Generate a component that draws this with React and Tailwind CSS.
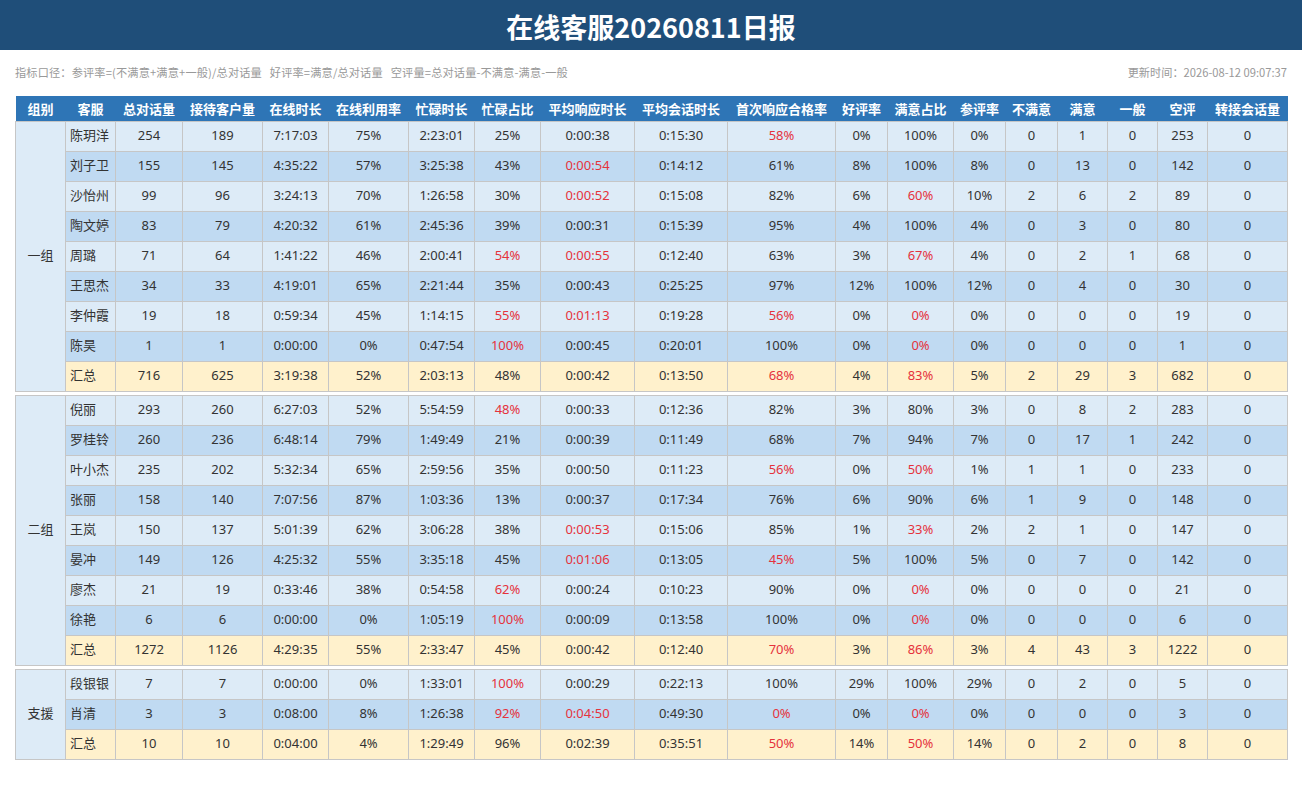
import React from 'react';

const widths = [50, 50, 67, 80, 66, 80, 66, 66, 94, 93, 108, 52, 66, 52, 52, 50, 50, 50, 80];

const headers = [
  '组别', '客服', '总对话量', '接待客户量', '在线时长', '在线利用率', '忙碌时长', '忙碌占比',
  '平均响应时长', '平均会话时长', '首次响应合格率', '好评率', '满意占比', '参评率',
  '不满意', '满意', '一般', '空评', '转接会话量',
];

// '!' prefix marks a value shown in red
const groups = [
  {
    name: '一组',
    rows: [
      ['陈玥洋', '254', '189', '7:17:03', '75%', '2:23:01', '25%', '0:00:38', '0:15:30', '!58%', '0%', '100%', '0%', '0', '1', '0', '253', '0'],
      ['刘子卫', '155', '145', '4:35:22', '57%', '3:25:38', '43%', '!0:00:54', '0:14:12', '61%', '8%', '100%', '8%', '0', '13', '0', '142', '0'],
      ['沙怡州', '99', '96', '3:24:13', '70%', '1:26:58', '30%', '!0:00:52', '0:15:08', '82%', '6%', '!60%', '10%', '2', '6', '2', '89', '0'],
      ['陶文婷', '83', '79', '4:20:32', '61%', '2:45:36', '39%', '0:00:31', '0:15:39', '95%', '4%', '100%', '4%', '0', '3', '0', '80', '0'],
      ['周璐', '71', '64', '1:41:22', '46%', '2:00:41', '!54%', '!0:00:55', '0:12:40', '63%', '3%', '!67%', '4%', '0', '2', '1', '68', '0'],
      ['王思杰', '34', '33', '4:19:01', '65%', '2:21:44', '35%', '0:00:43', '0:25:25', '97%', '12%', '100%', '12%', '0', '4', '0', '30', '0'],
      ['李仲霞', '19', '18', '0:59:34', '45%', '1:14:15', '!55%', '!0:01:13', '0:19:28', '!56%', '0%', '!0%', '0%', '0', '0', '0', '19', '0'],
      ['陈昊', '1', '1', '0:00:00', '0%', '0:47:54', '!100%', '0:00:45', '0:20:01', '100%', '0%', '!0%', '0%', '0', '0', '0', '1', '0'],
    ],
    total: ['汇总', '716', '625', '3:19:38', '52%', '2:03:13', '48%', '0:00:42', '0:13:50', '!68%', '4%', '!83%', '5%', '2', '29', '3', '682', '0'],
  },
  {
    name: '二组',
    rows: [
      ['倪丽', '293', '260', '6:27:03', '52%', '5:54:59', '!48%', '0:00:33', '0:12:36', '82%', '3%', '80%', '3%', '0', '8', '2', '283', '0'],
      ['罗桂铃', '260', '236', '6:48:14', '79%', '1:49:49', '21%', '0:00:39', '0:11:49', '68%', '7%', '94%', '7%', '0', '17', '1', '242', '0'],
      ['叶小杰', '235', '202', '5:32:34', '65%', '2:59:56', '35%', '0:00:50', '0:11:23', '!56%', '0%', '!50%', '1%', '1', '1', '0', '233', '0'],
      ['张丽', '158', '140', '7:07:56', '87%', '1:03:36', '13%', '0:00:37', '0:17:34', '76%', '6%', '90%', '6%', '1', '9', '0', '148', '0'],
      ['王岚', '150', '137', '5:01:39', '62%', '3:06:28', '38%', '!0:00:53', '0:15:06', '85%', '1%', '!33%', '2%', '2', '1', '0', '147', '0'],
      ['晏冲', '149', '126', '4:25:32', '55%', '3:35:18', '45%', '!0:01:06', '0:13:05', '!45%', '5%', '100%', '5%', '0', '7', '0', '142', '0'],
      ['廖杰', '21', '19', '0:33:46', '38%', '0:54:58', '!62%', '0:00:24', '0:10:23', '90%', '0%', '!0%', '0%', '0', '0', '0', '21', '0'],
      ['徐艳', '6', '6', '0:00:00', '0%', '1:05:19', '!100%', '0:00:09', '0:13:58', '100%', '0%', '!0%', '0%', '0', '0', '0', '6', '0'],
    ],
    total: ['汇总', '1272', '1126', '4:29:35', '55%', '2:33:47', '45%', '0:00:42', '0:12:40', '!70%', '3%', '!86%', '3%', '4', '43', '3', '1222', '0'],
  },
  {
    name: '支援',
    rows: [
      ['段银银', '7', '7', '0:00:00', '0%', '1:33:01', '!100%', '0:00:29', '0:22:13', '100%', '29%', '100%', '29%', '0', '2', '0', '5', '0'],
      ['肖清', '3', '3', '0:08:00', '8%', '1:26:38', '!92%', '!0:04:50', '0:49:30', '!0%', '0%', '!0%', '0%', '0', '0', '0', '3', '0'],
    ],
    total: ['汇总', '10', '10', '0:04:00', '4%', '1:29:49', '96%', '0:02:39', '0:35:51', '!50%', '14%', '!50%', '14%', '0', '2', '0', '8', '0'],
  },
];

const Cols = () => (
  <colgroup>
    {widths.map((w, i) => (
      <col key={i} style={{ width: w }} />
    ))}
  </colgroup>
);

const Cell = ({ value, first }) => {
  const red = value.startsWith('!');
  const text = red ? value.slice(1) : value;
  return (
    <td
      className={
        'h-[30px] border border-[#c6c6c6] p-0 ' +
        (first ? 'pl-1 text-left ' : 'text-center ') +
        (red ? 'text-[#e5323c]' : 'text-[#333]')
      }
    >
      {text}
    </td>
  );
};

const Row = ({ cells, bg, group, span }) => (
  <tr className={bg}>
    {group && (
      <td rowSpan={span} className="border border-[#c6c6c6] bg-[#ddebf7] text-center text-[#333]">
        {group}
      </td>
    )}
    {cells.map((v, i) => (
      <Cell key={i} value={v} first={i === 0} />
    ))}
  </tr>
);

const GroupBody = ({ g }) => {
  const span = g.rows.length + 1;
  return (
    <tbody>
      {g.rows.map((r, i) => (
        <Row
          key={i}
          cells={r}
          bg={i % 2 === 0 ? 'bg-[#ddebf7]' : 'bg-[#c0daf2]'}
          group={i === 0 ? g.name : null}
          span={span}
        />
      ))}
      <Row cells={g.total} bg="bg-[#fff1cc]" />
    </tbody>
  );
};

const tableClass = 'w-[1272px] table-fixed border-collapse text-[13px]';

export default function App() {
  return (
    <div className="min-h-[811px] bg-white font-['Noto_Sans','Noto_Sans_CJK_SC',sans-serif]">
      <div className="flex h-[50px] items-center justify-center bg-[#1f4e79] pt-[4px]">
        <h1 className="text-[27px] font-bold text-white font-['Noto_Sans_CJK_SC',sans-serif]">
          在线客服20260811日报
        </h1>
      </div>

      <div className="px-[15px]">
        <div className="flex h-[46px] items-center justify-between pb-[1px] text-[11.2px] text-[#999] font-['Noto_Sans_CJK_SC',sans-serif]">
          <span className="tracking-[0.15px]">
            指标口径：参评率=(不满意+满意+一般)/总对话量&nbsp;&nbsp;&nbsp;好评率=满意/总对话量&nbsp;&nbsp;&nbsp;空评量=总对话量-不满意-满意-一般
          </span>
          <span>更新时间：2026-08-12 09:07:37</span>
        </div>

        <table className={tableClass}>
          <Cols />
          <thead>
            <tr className="bg-[#2e75b6]">
              {headers.map((h) => (
                <th
                  key={h}
                  className="h-[25px] p-0 text-center text-[13px] font-bold text-white font-['Noto_Sans_CJK_SC',sans-serif]"
                >
                  {h}
                </th>
              ))}
            </tr>
          </thead>
          <GroupBody g={groups[0]} />
        </table>

        {groups.slice(1).map((g) => (
          <table key={g.name} className={tableClass + ' mt-[3px]'}>
            <Cols />
            <GroupBody g={g} />
          </table>
        ))}
      </div>
    </div>
  );
}
